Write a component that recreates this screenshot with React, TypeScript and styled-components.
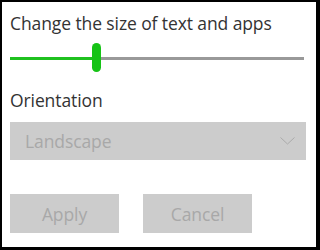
import React from "react";
import styled, { createGlobalStyle } from "styled-components";

const Global = createGlobalStyle`
  html, body { margin: 0; padding: 0; background: #fff; }
  * { box-sizing: border-box; }
`;

const Frame = styled.div`
  width: 320px;
  height: 250px;
  border-style: solid;
  border-color: #000;
  border-width: 2px 4px 3px 2px;
  background: #fff;
  padding: 10px 0 0 8px;
  font-family: "Open Sans", "Noto Sans", sans-serif;
  display: flex;
  flex-direction: column;
`;

const Label = styled.div<{ $top?: number }>`
  font-size: 17.5px;
  letter-spacing: -0.1px;
  line-height: 22px;
  color: #333;
  margin-top: ${(p) => p.$top ?? 0}px;
  white-space: nowrap;
`;

const SliderWrap = styled.div`
  position: relative;
  width: 294px;
  height: 29px;
  margin-top: 9px;
`;

const Track = styled.div`
  position: absolute;
  left: 0;
  right: 0;
  top: 14px;
  height: 3px;
  background: #999;
`;

const Fill = styled.div`
  position: absolute;
  left: 0;
  top: 14px;
  height: 3px;
  background: #1fc11f;
`;

const Thumb = styled.div`
  position: absolute;
  top: 0;
  width: 9px;
  height: 29px;
  border-radius: 5px;
  background: #16c316;
`;

const Select = styled.div`
  width: 296px;
  height: 38px;
  margin-top: 11px;
  background: #cccccc;
  display: flex;
  align-items: center;
  justify-content: space-between;
  padding: 0 11px 0 15px;
  font-size: 17.5px;
  letter-spacing: -0.1px;
  color: #a8a8a8;
`;

const Buttons = styled.div`
  display: flex;
  gap: 24px;
  margin-top: 34px;
`;

const Button = styled.div`
  width: 109px;
  height: 39px;
  background: #cccccc;
  color: #a8a8a8;
  font-size: 17.5px;
  letter-spacing: -0.1px;
  display: flex;
  align-items: center;
  justify-content: center;
`;

export default function App() {
  const pct = 82;
  return (
    <>
      <Global />
      <Frame>
        <Label>Change the size of text and apps</Label>
        <SliderWrap>
          <Track />
          <Fill style={{ width: pct }} />
          <Thumb style={{ left: pct }} />
        </SliderWrap>
        <Label $top={17}>Orientation</Label>
        <Select>
          <span>Landscape</span>
          <svg width="15" height="8" viewBox="0 0 15 8">
            <path d="M0.5 0.5 L7.5 7 L14.5 0.5" fill="none" stroke="#aaa" strokeWidth="1" />
          </svg>
        </Select>
        <Buttons>
          <Button>Apply</Button>
          <Button>Cancel</Button>
        </Buttons>
      </Frame>
    </>
  );
}
